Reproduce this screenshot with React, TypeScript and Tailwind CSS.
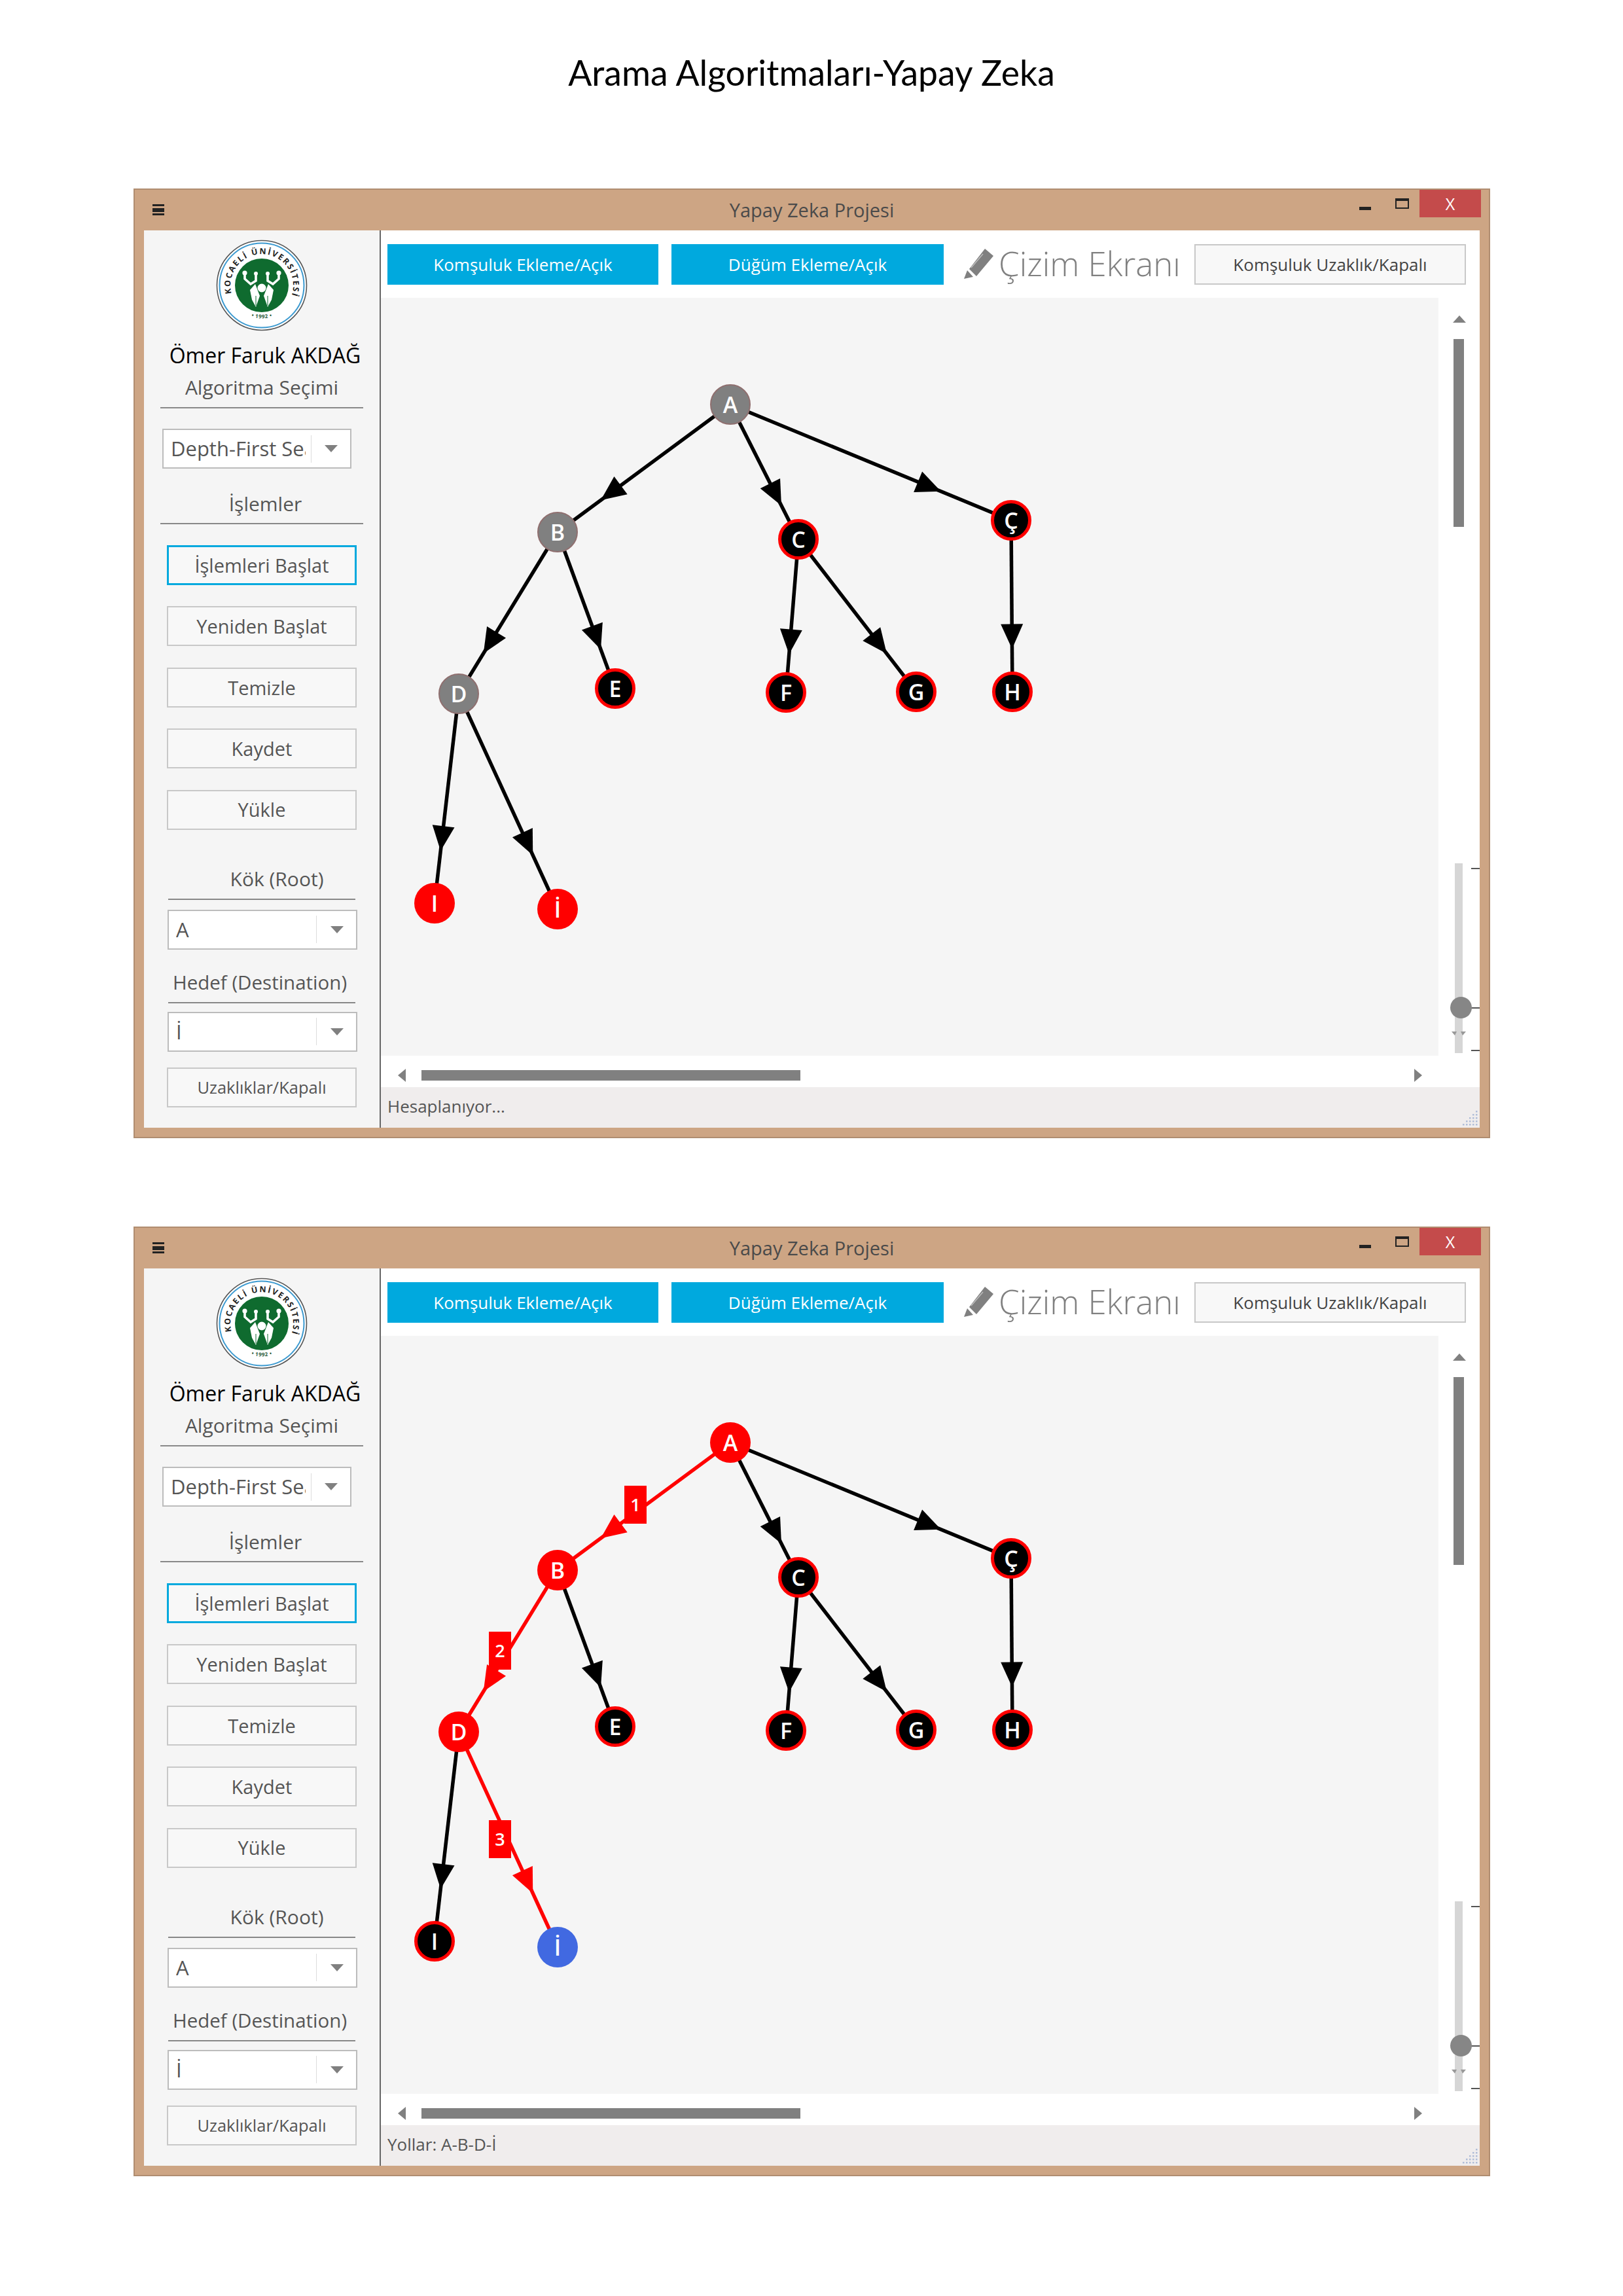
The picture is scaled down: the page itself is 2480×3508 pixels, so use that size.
const nodes: Record<string, [number, number]> = {
  A: [534, 163],
  B: [270, 358],
  C: [638, 369],
  "Ç": [963, 340],
  D: [119, 605],
  E: [358, 597],
  F: [619, 603],
  G: [818, 602],
  H: [965, 602],
  I: [82, 925],
  "İ": [270, 934],
}

const edges = [
  ["A", "B"],
  ["A", "C"],
  ["A", "Ç"],
  ["B", "D"],
  ["B", "E"],
  ["C", "F"],
  ["C", "G"],
  ["Ç", "H"],
  ["D", "I"],
  ["D", "İ"],
]

type NodeKind = "gray" | "black" | "red" | "blue"

const nodeClass: Record<NodeKind, string> = {
  gray: "bg-[#808080] border-2 border-[#8f6f6f]",
  black: "bg-black border-[5px] border-[#ff0000]",
  red: "bg-[#ff0000]",
  blue: "bg-[#4169e1]",
}

function Arrow({ from, to, color }: { from: string; to: string; color: string }) {
  const [x1, y1] = nodes[from]
  const [x2, y2] = nodes[to]
  const len = Math.hypot(x2 - x1, y2 - y1)
  const ux = (x2 - x1) / len
  const uy = (y2 - y1) / len
  const tx = x1 + (x2 - x1) * 0.75
  const ty = y1 + (y2 - y1) * 0.75
  const bx = tx - ux * 38
  const by = ty - uy * 38
  const pts = `${tx},${ty} ${bx - uy * 17},${by + ux * 17} ${bx + uy * 17},${by - ux * 17}`
  return (
    <g>
      <line x1={x1} y1={y1} x2={x2} y2={y2} stroke={color} strokeWidth={5.5} />
      <polygon points={pts} fill={color} />
    </g>
  )
}

function Logo() {
  return (
    <svg viewBox="0 0 140 140" className="w-[140px] h-[140px] mx-auto block">
      <circle cx="70" cy="70" r="68.5" fill="white" stroke="#555555" strokeWidth="1.6" />
      <circle cx="70" cy="70" r="64.5" fill="white" stroke="#3c9ad0" strokeWidth="2" />
      <circle cx="70" cy="70" r="41" fill="#0f6b2f" />
      <defs>
        <path id="logoArc" d="M 36 104 A 48 48 0 1 1 101 107" />
        <path id="logoYear" d="M 40 112 A 58 58 0 0 0 100 112" />
      </defs>
      <text fontSize="12.5" fontWeight="700" fill="#222222" letterSpacing="2" textAnchor="middle">
        <textPath href="#logoArc" startOffset="50%">KOCAELİ ÜNİVERSİTESİ</textPath>
      </text>
      <text fontSize="8" fontWeight="700" fill="#2a5a3a" letterSpacing="0.5" textAnchor="middle">
        <textPath href="#logoYear" startOffset="50%">• 1992 •</textPath>
      </text>
      <g fill="none" stroke="white" strokeWidth="3.6">
        <path d="M44 54 V60 L53 68 L61 63 V54" />
        <path d="M96 54 V60 L87 68 L79 63 V54" />
      </g>
      <g fill="white">
        <circle cx="44" cy="51" r="3.6" />
        <circle cx="61" cy="52" r="3" />
        <circle cx="79" cy="52" r="3" />
        <circle cx="96" cy="51" r="3.6" />
        <circle cx="70" cy="74" r="6.5" />
        <path d="M52 77 L60 68 L67 86 L61 103 L55 92 Z" />
        <path d="M88 77 L80 68 L73 86 L79 103 L85 92 Z" />
      </g>
      <path d="M61 86 V101 M79 86 V101" stroke="#0f6b2f" strokeWidth="1" />
    </svg>
  )
}

function Caret() {
  return <div className="w-0 h-0 border-x-[10px] border-x-transparent border-t-[11px] border-t-[#808080]" />
}

function Select({ value, className, caret }: { value: string; className: string; caret: string }) {
  return (
    <div className={`flex items-center h-[61px] border-2 border-[#bcbcbc] bg-white text-[31px] text-[#555555] ${className}`}>
      <div className="w-[225px] pl-[11px] pr-[8px]">
        <div className="overflow-hidden whitespace-nowrap">{value}</div>
      </div>
      <div className="w-px h-[42px] bg-[#dddddd]" />
      <div className="flex justify-center" style={{ marginLeft: caret }}>
        <Caret />
      </div>
    </div>
  )
}

function SideButton({ label, active, small }: { label: string; active?: boolean; small?: boolean }) {
  return (
    <div
      className={`ml-[35px] w-[290px] h-[61px] flex items-center justify-center bg-[#f8f8f8] text-[#555555] ${
        active ? "border-[3px] border-[#00a9de]" : "border-2 border-[#c8c8c8]"
      } ${small ? "text-[25.5px]" : "text-[29px]"}`}
    >
      {label}
    </div>
  )
}

function Sidebar() {
  return (
    <div className="w-[362px] shrink-0 flex flex-col bg-[#f5f5f5] border-r-2 border-[#666666]">
      <div className="mt-[14px]">
        <Logo />
      </div>
      <div className="mt-[17px] h-[40px] pl-[10px] text-center leading-[40px] text-[32px] font-medium text-black">Ömer Faruk AKDAĞ</div>
      <div className="mt-[9px] h-[40px] text-center leading-[40px] text-[30px] text-[#555555]">Algoritma Seçimi</div>
      <div className="mt-[10px] ml-[25px] w-[310px] h-[2px] bg-[#888888]" />
      <Select value="Depth-First Search" className="mt-[31px] ml-[28px] w-[289px]" caret="20px" />
      <div className="mt-[34px] h-[40px] pl-[11px] text-center leading-[40px] text-[30px] text-[#555555]">İşlemler</div>
      <div className="mt-[9px] ml-[25px] w-[310px] h-[2px] bg-[#888888]" />
      <div className="mt-[32px] flex flex-col gap-[32.4px]">
        <SideButton label="İşlemleri Başlat" active />
        <SideButton label="Yeniden Başlat" />
        <SideButton label="Temizle" />
        <SideButton label="Kaydet" />
        <SideButton label="Yükle" />
      </div>
      <div className="mt-[55px] h-[40px] pl-[46px] text-center leading-[40px] text-[30px] text-[#555555]">Kök (Root)</div>
      <div className="mt-[10px] ml-[37px] w-[286px] h-[2px] bg-[#888888]" />
      <Select value="A" className="mt-[15px] ml-[36px] w-[290px]" caret="21px" />
      <div className="mt-[30px] h-[40px] pr-[6px] text-center leading-[40px] text-[29.5px] text-[#555555]">Hedef (Destination)</div>
      <div className="mt-[10px] ml-[37px] w-[286px] h-[2px] bg-[#888888]" />
      <Select value="İ" className="mt-[13px] ml-[36px] w-[290px]" caret="21px" />
      <div className="mt-[24px]">
        <SideButton label="Uzaklıklar/Kapalı" small />
      </div>
    </div>
  )
}

function Pencil() {
  return (
    <svg viewBox="0 0 46 46" className="w-[46px] h-[46px] shrink-0">
      <path d="M33 0 L46 11 L20 42 L9 31 Z" fill="#808080" />
      <path d="M30 8 L12 29" stroke="#bdbdbd" strokeWidth="1.5" />
      <path d="M6 33 L15 43 L1 46 Z" fill="#808080" />
    </svg>
  )
}

function Canvas({ solved }: { solved: boolean }) {
  const kindOf = (name: string): NodeKind => {
    if (solved) {
      if (name === "İ") return "blue"
      return ["A", "B", "D"].includes(name) ? "red" : "black"
    }
    if (["A", "B", "D"].includes(name)) return "gray"
    return ["I", "İ"].includes(name) ? "red" : "black"
  }
  const path = ["A-B", "B-D", "D-İ"]
  const badges: [string, number, number][] = [
    ["1", 372, 229],
    ["2", 165, 452],
    ["3", 165, 740],
  ]
  return (
    <div className="relative w-[1616px] h-[1158px] bg-[#f5f5f5] overflow-hidden">
      <svg className="absolute inset-0 w-full h-full">
        {edges.map(([a, b]) => (
          <Arrow key={a + b} from={a} to={b} color={solved && path.includes(`${a}-${b}`) ? "#ff0000" : "#000000"} />
        ))}
      </svg>
      {Object.entries(nodes).map(([name, [x, y]]) => (
        <div
          key={name}
          className={`absolute w-[62px] h-[62px] rounded-full flex items-center justify-center text-white text-[34px] font-semibold ${nodeClass[kindOf(name)]}`}
          style={{ left: x - 31, top: y - 31 }}
        >
          {name}
        </div>
      ))}
      {solved &&
        badges.map(([n, x, y]) => (
          <div
            key={n}
            className="absolute w-[34px] h-[58px] bg-[#ff0000] flex items-center justify-center text-white text-[27px] font-semibold"
            style={{ left: x, top: y }}
          >
            {n}
          </div>
        ))}
    </div>
  )
}

function RightRail() {
  return (
    <div className="relative w-[63px] h-[1158px]">
      <div className="absolute left-[22px] top-[27px] w-0 h-0 border-x-[10px] border-x-transparent border-b-[11px] border-b-[#808080]" />
      <div className="absolute left-[23px] top-[63px] w-[16px] h-[287px] bg-[#808080]" />
      <div className="absolute left-[25px] top-[864px] w-[12px] h-[290px] bg-[#d6d6d6]" />
      <div className="absolute left-[50px] top-[871px] w-[13px] h-[2px] bg-[#555555]" />
      <div className="absolute left-[50px] top-[1084px] w-[13px] h-[2px] bg-[#555555]" />
      <div className="absolute left-[50px] top-[1149px] w-[13px] h-[2px] bg-[#555555]" />
      <div className="absolute left-[18px] top-[1068px] w-[33px] h-[33px] rounded-full bg-[#868686]" />
      <svg className="absolute left-[20px] top-[1120px] w-[22px] h-[8px]" viewBox="0 0 22 8">
        <path d="M0 1 L5 7 L8 1 Z M14 1 L17 7 L22 1 Z" fill="#999999" />
      </svg>
    </div>
  )
}

function Grip() {
  const dots = [
    [20, 2], [15, 7], [20, 7], [10, 12], [15, 12], [20, 12], [5, 17], [10, 17], [15, 17], [20, 17], [0, 22], [5, 22], [10, 22], [15, 22], [20, 22],
  ]
  return (
    <svg className="w-[23px] h-[25px] shrink-0" viewBox="0 0 23 25">
      {dots.map(([x, y]) => (
        <rect key={`${x}-${y}`} x={x} y={y} width="2.5" height="2.5" fill="#b0bdd8" />
      ))}
    </svg>
  )
}

function AppWindow({ solved, status }: { solved: boolean; status: string }) {
  return (
    <div className="ml-[204px] w-[2073px] h-[1451px] flex flex-col bg-[#cda584] border-2 border-[#b08d70]">
      <div className="relative h-[62px] shrink-0">
        <div className="absolute left-[27px] top-[22px] w-[18px] h-[17px] flex flex-col justify-between">
          <div className="h-[3px] bg-[#222222]" />
          <div className="h-[6px] bg-[#222222]" />
          <div className="h-[3px] bg-[#222222]" />
        </div>
        <div className="text-center leading-[62px] text-[29px] text-[#4a4a4a]">Yapay Zeka Projesi</div>
        <div className="absolute left-[1871px] top-[26px] w-[18px] h-[5px] bg-[#222222]" />
        <div className="absolute left-[1926px] top-[13px] w-[21px] h-[16px] border-2 border-t-[4px] border-[#222222]" />
        <div className="absolute left-[1963px] top-0 w-[94px] h-[42px] bg-[#c44b4b] text-white text-center leading-[42px] text-[25px]">X</div>
      </div>
      <div className="flex-1 min-h-0 mx-[14px] mb-[14px] flex">
        <Sidebar />
        <div className="flex-1 flex flex-col bg-white">
          <div className="h-[103px] shrink-0 flex items-start pl-[10px] pt-[21px]">
            <div className="w-[414px] h-[62px] flex items-center justify-center bg-[#00a9de] text-white text-[26px]">Komşuluk Ekleme/Açık</div>
            <div className="ml-[20px] w-[416px] h-[62px] flex items-center justify-center bg-[#00a9de] text-white text-[26px]">Düğüm Ekleme/Açık</div>
            <div className="ml-[30px] mt-[7px]">
              <Pencil />
            </div>
            <div className="ml-[8px] w-[274px] h-[62px] leading-[58px] whitespace-nowrap text-[51px] font-light text-[#808080]">Çizim Ekranı</div>
            <div className="ml-[25px] w-[415px] h-[62px] flex items-center justify-center bg-[#f8f8f8] border-2 border-[#c8c8c8] text-[#444444] text-[26px]">Komşuluk Uzaklık/Kapalı</div>
          </div>
          <div className="flex">
            <Canvas solved={solved} />
            <RightRail />
          </div>
          <div className="h-[48px] shrink-0 flex items-center pl-[26px] pt-[12px]">
            <div className="w-0 h-0 border-y-[10px] border-y-transparent border-r-[12px] border-r-[#808080]" />
            <div className="ml-[24px] w-[579px] h-[16px] bg-[#808080]" />
            <div className="ml-[938px] w-0 h-0 border-y-[10px] border-y-transparent border-l-[12px] border-l-[#808080]" />
          </div>
          <div className="flex-1 flex items-end justify-between bg-[#f0eded] pl-[10px] pr-[3px] pb-[3px]">
            <span className="self-center text-[26px] text-[#555555]">{status}</span>
            <Grip />
          </div>
        </div>
      </div>
    </div>
  )
}

export default function App() {
  return (
    <div className="w-[2480px] h-[3508px] bg-white font-['Open_Sans',sans-serif]">
      <h1 className="h-[288px] pt-[78px] text-center font-['Lato',sans-serif] text-[53.5px] leading-[64px] text-black">Arama Algoritmaları-Yapay Zeka</h1>
      <AppWindow solved={false} status="Hesaplanıyor..." />
      <div className="h-[135px]" />
      <AppWindow solved status="Yollar: A-B-D-İ" />
    </div>
  )
}
